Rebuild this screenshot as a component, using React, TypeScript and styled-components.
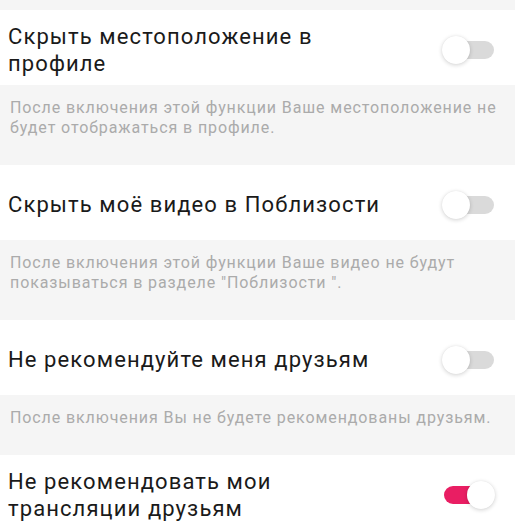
import * as React from "react";
import styled, { createGlobalStyle } from "styled-components";

const GlobalStyle = createGlobalStyle`
  body {
    margin: 0;
    background-color: #f5f5f5;
    font-family: Roboto, "Noto Sans", "Liberation Sans", sans-serif;
  }
`;

const Page = styled.div`
  display: flex;
  flex-direction: column;
  padding-top: 10px;
  background-color: #f5f5f5;
`;

const SettingRow = styled.div`
  display: flex;
  align-items: center;
  justify-content: space-between;
  box-sizing: border-box;
  min-height: 75px;
  padding: 4px 20px 0 8px;
  background-color: #ffffff;
`;

const Title = styled.div`
  max-width: 395px;
  font-size: 22px;
  line-height: 27px;
  letter-spacing: 1.1px;
  color: #1a1a1a;
`;

const Description = styled.div`
  padding: 13px 6px 27px 10px;
  font-size: 16px;
  line-height: 20px;
  letter-spacing: 0.9px;
  color: #ababab;
  background-color: #f5f5f5;
`;

const Track = styled.div<{ $on: boolean }>`
  position: relative;
  flex-shrink: 0;
  width: 53px;
  height: 28px;

  &::before {
    content: "";
    position: absolute;
    left: 2px;
    right: 1px;
    top: 5px;
    height: 18px;
    border-radius: 9px;
    background-color: ${(p) => (p.$on ? "#e91e63" : "#dadada")};
  }
`;

const Knob = styled.div<{ $on: boolean }>`
  position: absolute;
  top: 0;
  left: ${(p) => (p.$on ? "25px" : "0")};
  width: 28px;
  height: 28px;
  border-radius: 50%;
  background-color: #ffffff;
  box-shadow: 0 1px 4px rgba(0, 0, 0, 0.18), 0 0 1px rgba(0, 0, 0, 0.08);
`;

const Switch = ({ on }: { on: boolean }) => (
  <Track $on={on}>
    <Knob $on={on} />
  </Track>
);

const settings = [
  {
    title: "Скрыть местоположение в профиле",
    hint: "После включения этой функции Ваше местоположение не будет отображаться в профиле.",
    on: false,
  },
  {
    title: "Скрыть моё видео в Поблизости",
    hint: "После включения этой функции Ваше видео не будут показываться в разделе \"Поблизости \".",
    on: false,
  },
  {
    title: "Не рекомендуйте меня друзьям",
    hint: "После включения Вы не будете рекомендованы друзьям.",
    on: false,
  },
  {
    title: "Не рекомендовать мои трансляции друзьям",
    hint: "",
    on: true,
  },
];

const App = () => (
  <Page>
    <GlobalStyle />
    {settings.map((s) => (
      <React.Fragment key={s.title}>
        <SettingRow>
          <Title>{s.title}</Title>
          <Switch on={s.on} />
        </SettingRow>
        {s.hint && <Description>{s.hint}</Description>}
      </React.Fragment>
    ))}
  </Page>
);

export default App;
